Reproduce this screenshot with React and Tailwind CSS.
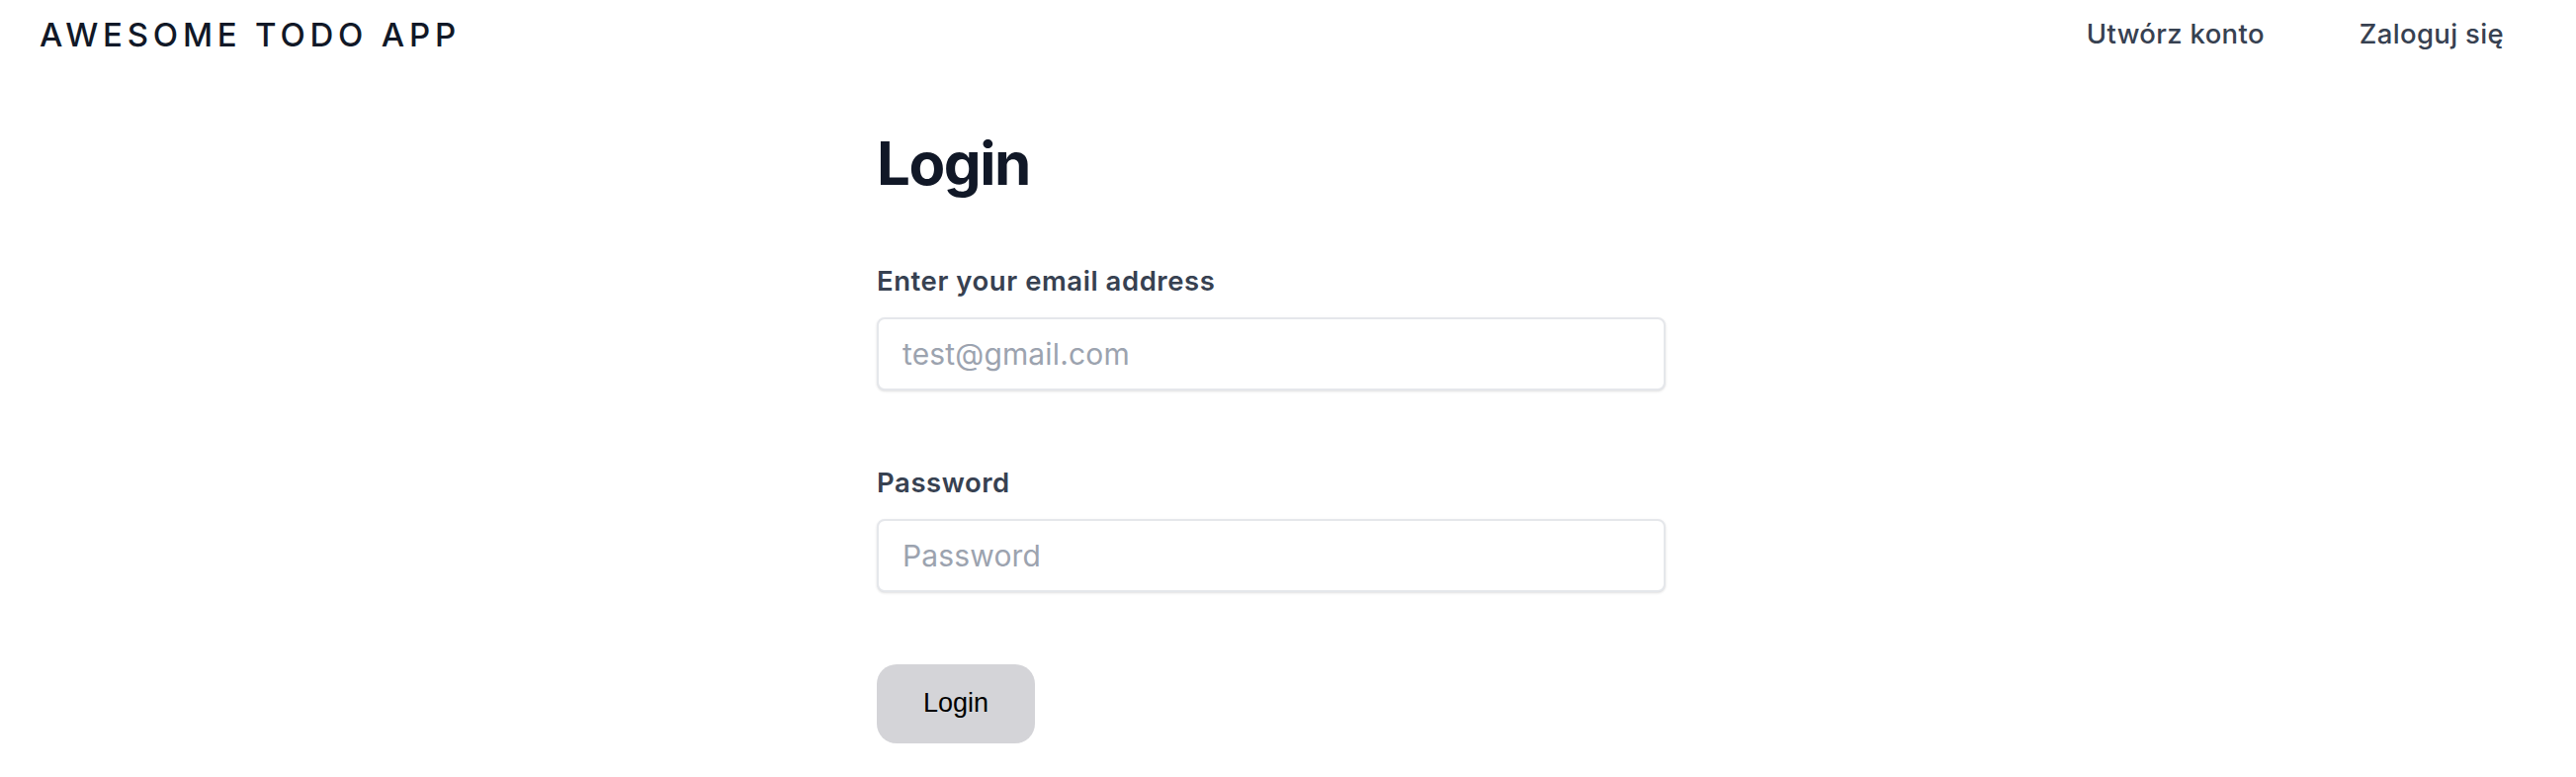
import React from "react";

export default function App() {
  return (
    <div className="min-h-screen bg-white font-['Inter',sans-serif]">
      <header className="flex h-[70px] items-center justify-between pl-[40px] pr-[73px]">
        <div className="text-[33px] font-medium leading-none tracking-[0.145em] text-[#111827]">
          AWESOME TODO APP
        </div>
        <nav className="flex items-center gap-[96px] text-[27.5px] font-medium leading-none tracking-[0.012em] text-[#374151]">
          <a href="#">Utwórz konto</a>
          <a href="#">Zaloguj się</a>
        </nav>
      </header>
      <main className="mx-auto w-[832px] pt-[62px]">
        <h1 className="text-[60px] font-bold leading-[66.7px] tracking-tight text-[#111827]">
          Login
        </h1>
        <form className="flex flex-col" onSubmit={(e) => e.preventDefault()}>
          <label className="mt-[65px] mb-[17px] text-[27.5px] font-semibold leading-[40px] tracking-[0.02em] text-[#374151]">
            Enter your email address
          </label>
          <input
            type="email"
            placeholder="test@gmail.com"
            className="h-[74px] w-[798px] rounded-[8px] border-2 border-[#e5e7eb] bg-white px-[24px] text-[30px] tracking-[0.005em] text-[#111827] shadow-sm outline-none placeholder:text-[#9ca3af]"
          />
          <label className="mt-[73px] mb-[17px] text-[27.5px] font-semibold leading-[40px] tracking-[0.02em] text-[#374151]">
            Password
          </label>
          <input
            type="password"
            placeholder="Password"
            className="h-[74px] w-[798px] rounded-[8px] border-2 border-[#e5e7eb] bg-white px-[24px] text-[30px] tracking-[0.005em] text-[#111827] shadow-sm outline-none placeholder:text-[#9ca3af]"
          />
          <div className="mt-[73px]">
            <button
              type="submit"
              className="flex h-[80px] w-[160px] items-center justify-center rounded-[20px] bg-[#d4d4d8] font-['Liberation_Sans',Arial,sans-serif] text-[27px] text-black"
            >
              Login
            </button>
          </div>
        </form>
      </main>
    </div>
  );
}
